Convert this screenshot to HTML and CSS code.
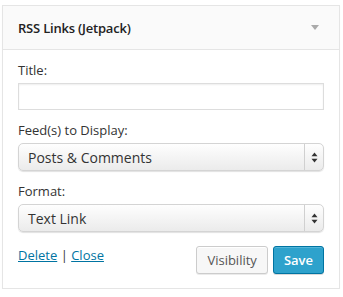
FILE: index.html
```html
<!DOCTYPE html>
<html>
<head>
<meta charset="utf-8">
<link rel="stylesheet" href="styles.css">
</head>
<body>
<div class="widget">
  <div class="widget-top">
    <h3 class="widget-title">RSS Links (Jetpack)</h3>
    <span class="toggle"></span>
  </div>
  <div class="widget-inside">
    <label class="field-label">Title:</label>
    <input class="text-input" type="text">
    <label class="field-label">Feed(s) to Display:</label>
    <div class="select">
      <span class="select-value">Posts &amp; Comments</span>
      <span class="select-arrows">
        <svg width="7" height="11" viewBox="0 0 7 11"><path d="M3.5 0.5 L6.5 4.2 H0.5 Z" fill="#333"/><path d="M3.5 10.5 L6.5 6.8 H0.5 Z" fill="#333"/></svg>
      </span>
    </div>
    <label class="field-label">Format:</label>
    <div class="select">
      <span class="select-value">Text Link</span>
      <span class="select-arrows">
        <svg width="7" height="11" viewBox="0 0 7 11"><path d="M3.5 0.5 L6.5 4.2 H0.5 Z" fill="#333"/><path d="M3.5 10.5 L6.5 6.8 H0.5 Z" fill="#333"/></svg>
      </span>
    </div>
    <div class="actions">
      <div class="links"><a href="#">Delete</a> | <a href="#">Close</a></div>
      <div class="buttons">
        <button class="btn">Visibility</button>
        <button class="btn btn-primary">Save</button>
      </div>
    </div>
  </div>
</div>
</body>
</html>
```
FILE: styles.css
```css
* { box-sizing: border-box; }
body {
  margin: 0;
  background: #fff;
  font-family: "Open Sans", "Noto Sans", sans-serif;
  color: #333;
}
.widget {
  margin: 5px 0 0 2px;
  width: 338px;
  border: 1px solid #e5e5e5;
  box-shadow: 0 1px 1px rgba(0,0,0,0.04);
  background: #fff;
}
.widget-top {
  height: 44px;
  background: #fafafa;
  border-bottom: 1px solid #e5e5e5;
  display: flex;
  align-items: center;
  justify-content: space-between;
  padding: 0 20px 0 15px;
}
.widget-title {
  margin: 0;
  font-size: 13px;
  font-weight: 600;
  color: #222;
  letter-spacing: -0.2px;
}
.toggle {
  width: 0;
  height: 0;
  border-left: 4px solid transparent;
  border-right: 4px solid transparent;
  border-top: 5px solid #aaa;
}
.widget-inside {
  padding: 11px 15px 14px 15px;
  display: flex;
  flex-direction: column;
}
.field-label {
  font-size: 13px;
  line-height: 18px;
  color: #333;
  margin-bottom: 4px;
}
.text-input {
  height: 27px;
  border: 1px solid #ddd;
  box-shadow: inset 0 1px 2px rgba(0,0,0,0.07);
  margin: 0 0 11px 0;
  width: 100%;
}
.select {
  position: relative;
  height: 28px;
  border: 1px solid #d4d4d4;
  border-radius: 5px;
  background: linear-gradient(#fefefe, #ebebeb);
  box-shadow: 0 1px 1px rgba(0,0,0,0.12);
  display: flex;
  align-items: center;
  margin-bottom: 11px;
}
.select-value {
  flex: 1;
  font-size: 14px;
  padding-left: 9px;
  color: #333;
}
.select-arrows {
  width: 19px;
  height: 100%;
  border-left: 1px solid #d0d0d0;
  display: flex;
  align-items: center;
  justify-content: center;
}
.actions {
  display: flex;
  justify-content: space-between;
  align-items: flex-start;
  margin-top: 3px;
}
.links {
  font-size: 13px;
  color: #333;
  line-height: 18px;
}
.links a {
  color: #0074a2;
  text-decoration: underline;
}
.buttons {
  display: flex;
  gap: 5px;
}
.btn {
  font-family: "Open Sans", "Noto Sans", sans-serif;
  height: 28px;
  font-size: 13px;
  padding: 0 10px;
  border: 1px solid #ccc;
  border-radius: 3px;
  background: #f7f7f7;
  color: #555;
  box-shadow: inset 0 1px 0 #fff, 0 1px 0 rgba(0,0,0,0.08);
}
.btn-primary {
  background: #2ea2cc;
  border-color: #0074a2;
  color: #fff;
  font-weight: 600;
  box-shadow: inset 0 1px 0 rgba(120,200,230,0.5), 0 1px 0 rgba(0,0,0,0.15);
}
```
